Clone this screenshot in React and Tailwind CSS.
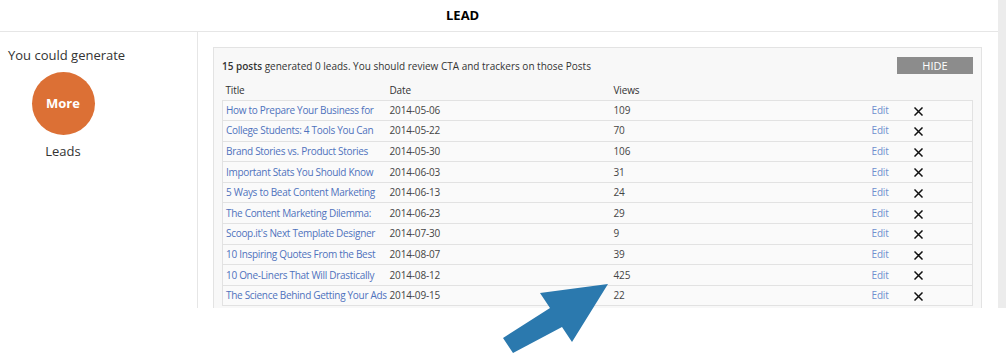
import React from "react";

const posts = [
  { title: "How to Prepare Your Business for", date: "2014-05-06", views: 109 },
  { title: "College Students: 4 Tools You Can", date: "2014-05-22", views: 70 },
  { title: "Brand Stories vs. Product Stories", date: "2014-05-30", views: 106 },
  { title: "Important Stats You Should Know", date: "2014-06-03", views: 31 },
  { title: "5 Ways to Beat Content Marketing", date: "2014-06-13", views: 24 },
  { title: "The Content Marketing Dilemma:", date: "2014-06-23", views: 29 },
  { title: "Scoop.it's Next Template Designer", date: "2014-07-30", views: 9 },
  { title: "10 Inspiring Quotes From the Best", date: "2014-08-07", views: 39 },
  { title: "10 One-Liners That Will Drastically", date: "2014-08-12", views: 425 },
  { title: "The Science Behind Getting Your Ads", date: "2014-09-15", views: 22 },
];

const Cross = () => (
  <svg width="9" height="9" viewBox="0 0 9 9" className="inline-block">
    <path d="M1 1 L8 8 M8 1 L1 8" stroke="#111" strokeWidth="1.5" strokeLinecap="square" />
  </svg>
);

function App() {
  return (
    <div className="relative w-[1006px] h-[360px] bg-white overflow-hidden font-['Open_Sans',sans-serif] text-[#555]">
      <div className="flex h-[308px]">
        <div className="flex-1 flex flex-col">
          {/* header */}
          <div className="h-[32px] border-b border-[#e6e6e6] flex items-center pl-[446px] shrink-0">
            <span className="text-[13px] font-bold text-black">LEAD</span>
          </div>

          <div className="flex flex-1 min-h-0">
            {/* left panel */}
            <div className="w-[198px] border-r border-[#e6e6e6] shrink-0 pt-[14px]">
              <div className="pl-[8px] text-[13px] text-[#333] leading-[18px]">You could generate</div>
              <div className="w-[126px] flex flex-col items-center mt-[8px]">
                <div className="w-[63px] h-[63px] rounded-full bg-[#dc7035] flex items-center justify-center text-white font-bold text-[13px]">
                  More
                </div>
                <div className="mt-[7px] text-[13px] text-[#333] leading-[18px]">Leads</div>
              </div>
            </div>

            {/* posts box */}
            <div className="flex-1 pl-[15px] pr-[16px] pt-[15px] min-h-0">
              <div className="h-full bg-[#f8f8f8] border border-[#e3e3e3] border-b-0 pl-[8px] pr-[8px] pt-[8px] overflow-hidden">
                <div className="flex items-center justify-between h-[18px] mb-[7px]">
                  <div className="text-[10px] text-[#333] mt-[2px]">
                    <span className="font-semibold">15 posts</span> generated 0 leads. You should review CTA and trackers on those Posts
                  </div>
                  <button className="w-[76px] h-[17px] bg-[#8c8c8c] text-white text-[11px] leading-[17px] text-center">
                    HIDE
                  </button>
                </div>
                <table className="table-fixed border-collapse text-[10px] tracking-[-0.15px] w-[750px]">
                  <colgroup>
                    <col className="w-[166px]" />
                    <col className="w-[222px]" />
                    <col className="w-[258px]" />
                    <col className="w-[40px]" />
                    <col className="w-[64px]" />
                  </colgroup>
                  <thead>
                    <tr className="h-[19px] text-[#333]">
                      <th className="text-left font-normal pl-[3px] align-middle">Title</th>
                      <th className="text-left font-normal pl-[1px]">Date</th>
                      <th className="text-left font-normal pl-[3px]">Views</th>
                      <th></th>
                      <th></th>
                    </tr>
                  </thead>
                  <tbody>
                    {posts.map((p) => (
                      <tr key={p.title} className="h-[20.6px] border border-[#e2e2e2] bg-[#fafafa]">
                        <td className="pl-[3px] text-[#4f72bd] whitespace-nowrap overflow-hidden tracking-[-0.3px]">{p.title}</td>
                        <td className="pl-[1px] text-[#444]">{p.date}</td>
                        <td className="pl-[3px] text-[#444]">{p.views}</td>
                        <td className="pl-[3px] text-[#6f8fcf]">Edit</td>
                        <td className="pl-[5px] leading-none"><Cross /></td>
                      </tr>
                    ))}
                  </tbody>
                </table>
              </div>
            </div>
          </div>
        </div>
        {/* scrollbar strip */}
        <div className="w-[9px] bg-[#ececec] shrink-0" />
      </div>

      {/* pointer arrow */}
      <svg className="absolute left-0 top-0 pointer-events-none" width="1006" height="360">
        <polygon
          points="608,284 540,293 550,308 503,338 513,353 562,327 572,342"
          fill="#2b79ae"
        />
      </svg>
    </div>
  );
}

export default App;
